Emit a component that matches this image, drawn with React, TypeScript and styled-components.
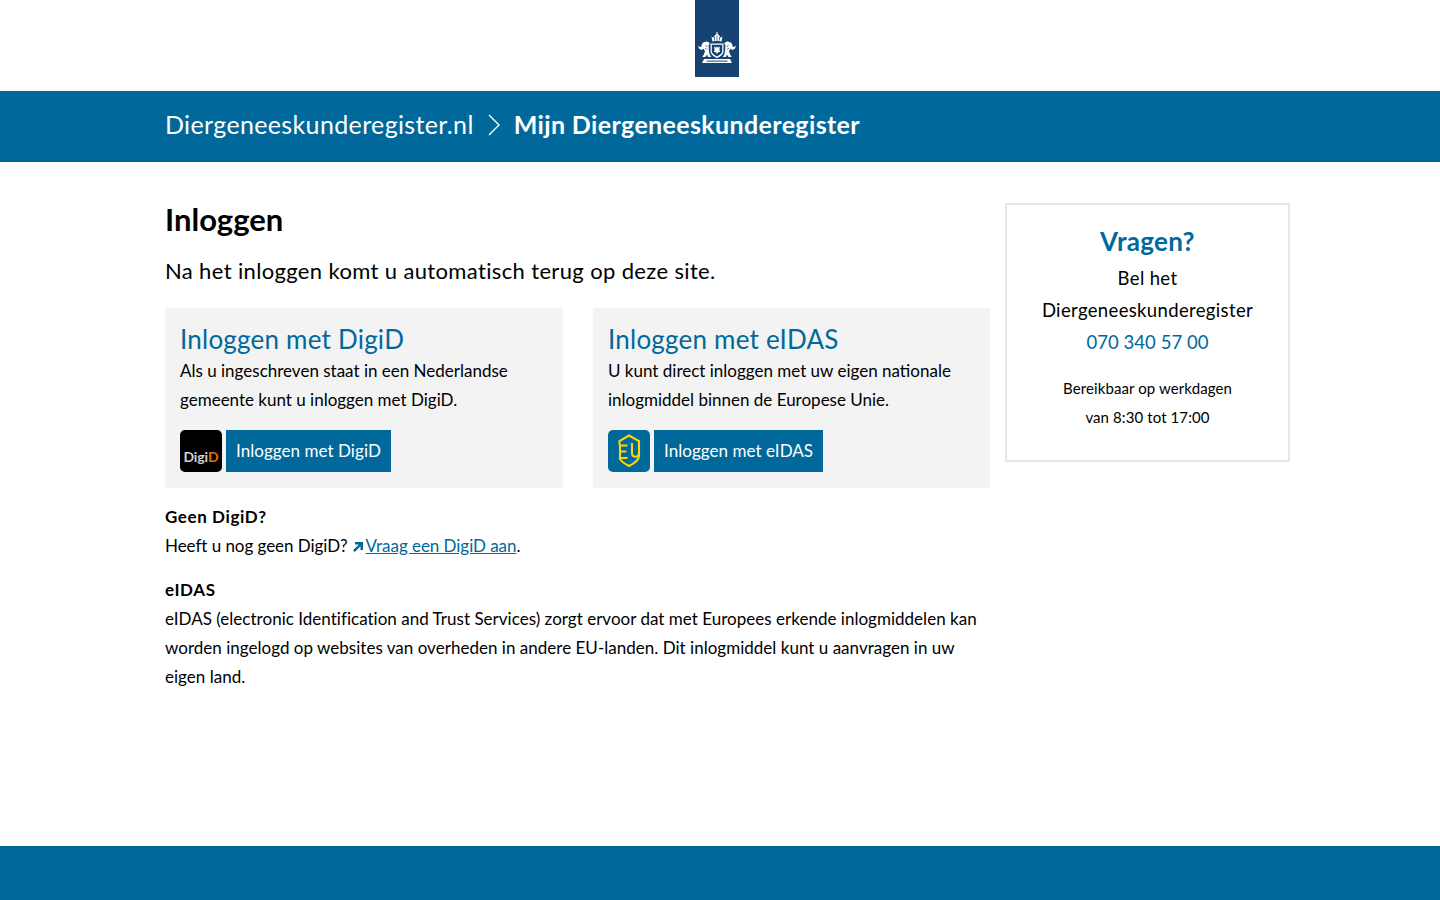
import React from 'react';
import styled, { createGlobalStyle } from 'styled-components';

const GlobalStyle = createGlobalStyle`
  html, body { margin: 0; padding: 0; background: #fff; }
  body {
    font-family: Lato, "Noto Sans", sans-serif;
    color: #000;
    font-size: 16px;
    line-height: 29px;
  }
`;

const Page = styled.div`
  min-height: 900px;
  display: flex;
  flex-direction: column;
`;

const LogoBar = styled.header`
  height: 91px;
  display: flex;
  justify-content: center;
  box-sizing: border-box;
  padding-left: 154px;
  padding-right: 160px;
`;

const LogoRibbon = styled.div`
  width: 44px;
  height: 77px;
  background: #154273;
  display: flex;
  flex-direction: column;
  align-items: center;
  justify-content: flex-end;
  padding-bottom: 13px;
  box-sizing: border-box;
`;

const Band = styled.div`
  height: 71px;
  box-sizing: border-box;
  padding: 0 150px 4px 165px;
  background: #01689b;
  color: #fff;
  display: flex;
  align-items: center;
  font-size: 25px;
`;

const BandLink = styled.a`
  color: #fff;
  text-decoration: none;
  letter-spacing: 0.36px;
`;

const BandChevron = styled.svg`
  width: 12px;
  height: 22px;
  margin: 0 14px;
`;

const BandTitle = styled.strong`
  font-weight: 700;
  letter-spacing: 0.37px;
`;

const Content = styled.div`
  flex: 1;
  padding: 41px 150px 0 165px;
  display: grid;
  grid-template-columns: 825px 285px;
  column-gap: 15px;
  align-items: start;
`;

const Main = styled.main``;

const Title = styled.h1`
  margin: 0;
  font-size: 31px;
  line-height: 32px;
  font-weight: 700;
`;

const Intro = styled.p`
  margin: 20px 0 0;
  font-size: 22px;
  line-height: 32px;
  letter-spacing: 0.36px;
`;

const Cards = styled.div`
  margin-top: 21px;
  display: grid;
  grid-template-columns: 398px 397px;
  column-gap: 30px;
`;

const Card = styled.section`
  background: #f3f3f3;
  height: 180px;
  box-sizing: border-box;
  padding: 15px;
`;

const CardTitle = styled.h2`
  margin: 0;
  font-size: 26px;
  line-height: 33px;
  font-weight: 400;
  color: #01689b;
  letter-spacing: 0.22px;
`;

const CardText = styled.p`
  margin: 0;
  font-size: 17px;
  line-height: 29px;
`;

const LoginRow = styled.div`
  margin-top: 16px;
  display: flex;
  gap: 4px;
`;

const LoginIcon = styled.div<{ $bg: string }>`
  width: 42px;
  height: 42px;
  border-radius: 5px;
  background: ${(p) => p.$bg};
  display: flex;
  align-items: center;
  justify-content: center;
`;

const DigidMark = styled.span`
  font-size: 14px;
  line-height: 1;
  font-weight: 700;
  color: #cfcfcf;
  margin-top: 12px;
  letter-spacing: -0.1px;
`;

const DigidAccent = styled.span`
  color: #e17000;
`;

const LoginButton = styled.a`
  height: 42px;
  padding: 0 10px;
  background: #01689b;
  color: #fff;
  font-size: 17px;
  line-height: 42px;
  letter-spacing: 0.05px;
  text-decoration: none;
`;

const InfoBlock = styled.div`
  margin-top: 14px;
  font-size: 17px;
  line-height: 29px;

  & + & {
    margin-top: 15px;
  }
`;

const InfoHeading = styled.h3`
  margin: 0;
  font-size: 17px;
  line-height: 29px;
  font-weight: 700;
  letter-spacing: 0.6px;
`;

const InfoText = styled.p<{ $spacing: number }>`
  margin: 0;
  letter-spacing: ${(p) => p.$spacing}px;
`;

const ExternalLink = styled.a`
  color: #01689b;
  text-decoration: underline;
`;

const ExternalIcon = styled.svg`
  width: 10px;
  height: 10px;
  margin: 0 3px 0 5px;
`;

const Aside = styled.aside`
  border: 2px solid #e6e6e6;
  height: 259px;
  box-sizing: border-box;
  padding: 18px 15px 0;
  text-align: center;
`;

const AsideTitle = styled.h2`
  margin: 0 0 3px;
  color: #01689b;
  font-size: 26px;
  line-height: 36px;
  font-weight: 700;
  letter-spacing: 0.3px;
`;

const AsideText = styled.p`
  margin: 0;
  font-size: 18.5px;
  line-height: 32px;
  letter-spacing: 0.35px;
`;

const AsidePhone = styled(AsideText)`
  color: #01689b;
  letter-spacing: 0.05px;
`;

const AsideHours = styled.p`
  margin: 16px 0 0;
  font-size: 15px;
  line-height: 29px;
  letter-spacing: 0.1px;
`;

const Footer = styled.footer`
  height: 54px;
  background: #01689b;
`;

const Crest = () => (
  <svg width="38" height="32" viewBox="0 0 38 32" fill="#fff">
    {/* crown */}
    <path d="M14.500 9.500 13.500 4.500l2 1.300 1.200-2.300L19 1.500l2.300 2 1.200 2.300 2-1.300-1 5c-2.800-.9-6.200-.9-9 0Z" />
    <path d="M18.500 0h1v2h-1Z" />
    <path d="M16.500 5v3.500M19 3.500v5M21.500 5v3.500" stroke="#154273" strokeWidth=".7" />
    {/* shield */}
    <path d="M12.500 11.500h13v7.500c0 3.500-3 5.500-6.500 7-3.500-1.500-6.500-3.500-6.500-7Z" />
    <path d="M13.800 12.800h10.400v6.200c0 2.600-2.700 4.100-5.200 5.400-2.500-1.300-5.200-2.800-5.200-5.400Z" fill="#154273" />
    <path d="M16 14.500l2 1.200 1-1.500 1 1.500 2-1.200-.6 3 .6 2.500-2 .2-1 1.800-1-1.800-2-.2.600-2.500Z" />
    {/* lions */}
    <path d="M8.500 9.500c1.700 0 2.900 1 3.300 2.500l-1.200 1 .2 4c0 2.500.6 4.500 1.400 6.500l1.300 1.500H10l-.8-2.500-1.800 2.500H4.300l1.400-2.300L7 19.500l-1.200-2.800-2.300 1.300L1 16.500l-1-3 1.500 1.300 1.800.2.200-2 1.500-2.500Z" />
    <path d="M29.500 9.500c-1.700 0-2.900 1-3.300 2.500l1.200 1-.2 4c0 2.500-.6 4.500-1.400 6.500L24.500 25H28l.8-2.500 1.800 2.500h3.100l-1.400-2.300L31 19.500l1.200-2.800 2.300 1.300 2.500-1.500 1-3-1.500 1.300-1.800.2-.2-2-1.500-2.500Z" />
    <path d="M7.500 13l1.500 2M7 16l2 1.500M30.500 13L29 15M31 16l-2 1.500" stroke="#154273" strokeWidth=".7" />
    {/* ribbon */}
    <path d="M6 27h26l2 4H4Z" />
    <path d="M8.500 28.600h21v1h-21Z" fill="#154273" />
  </svg>
);

const EuShield = () => (
  <svg width="24" height="34" viewBox="0 0 24 34" fill="none" stroke="#ffd500" strokeWidth="2.100">
    <path d="M2.500 11V7L12 1.500 22 7v15c0 4-6 8-10 10-4-2-8-4-9.500-8" />
    <path d="M10.500 11.500H3v12.500h7.500M3 17.500h6.500" />
    <path d="M15 9v10c0 5 7 5 7 0" />
  </svg>
);

const App: React.FC = () => (
  <Page>
    <GlobalStyle />
    <LogoBar>
      <LogoRibbon>
        <Crest />
      </LogoRibbon>
    </LogoBar>
    <Band>
      <BandLink href="#">Diergeneeskunderegister.nl</BandLink>
      <BandChevron viewBox="0 0 12 22" fill="none" stroke="#fff" strokeWidth="1.400">
        <path d="M1 1l10 10L1 21" />
      </BandChevron>
      <BandTitle>Mijn Diergeneeskunderegister</BandTitle>
    </Band>
    <Content>
      <Main>
        <Title>Inloggen</Title>
        <Intro>Na het inloggen komt u automatisch terug op deze site.</Intro>
        <Cards>
          <Card>
            <CardTitle>Inloggen met DigiD</CardTitle>
            <CardText>
              Als u ingeschreven staat in een Nederlandse gemeente kunt u inloggen met DigiD.
            </CardText>
            <LoginRow>
              <LoginIcon $bg="#000">
                <DigidMark>
                  Digi<DigidAccent>D</DigidAccent>
                </DigidMark>
              </LoginIcon>
              <LoginButton href="#">Inloggen met DigiD</LoginButton>
            </LoginRow>
          </Card>
          <Card>
            <CardTitle>Inloggen met eIDAS</CardTitle>
            <CardText>
              U kunt direct inloggen met uw eigen nationale inlogmiddel binnen de Europese Unie.
            </CardText>
            <LoginRow>
              <LoginIcon $bg="#01689b">
                <EuShield />
              </LoginIcon>
              <LoginButton href="#">Inloggen met eIDAS</LoginButton>
            </LoginRow>
          </Card>
        </Cards>
        <InfoBlock>
          <InfoHeading>Geen DigiD?</InfoHeading>
          <InfoText $spacing={-0.05}>
            Heeft u nog geen DigiD?
            <ExternalIcon viewBox="0 0 10 10" fill="#01689b">
              <path d="M2 0h8v8H7.500V4.200L1.800 10 0 8.200 5.800 2.500H2Z" />
            </ExternalIcon>
            <ExternalLink href="#">Vraag een DigiD aan</ExternalLink>.
          </InfoText>
        </InfoBlock>
        <InfoBlock>
          <InfoHeading>eIDAS</InfoHeading>
          <InfoText $spacing={0.02}>
            eIDAS (electronic Identification and Trust Services) zorgt ervoor dat met Europees
            erkende inlogmiddelen kan worden ingelogd op websites van overheden in andere EU-landen.
            Dit inlogmiddel kunt u aanvragen in uw eigen land.
          </InfoText>
        </InfoBlock>
      </Main>
      <Aside>
        <AsideTitle>Vragen?</AsideTitle>
        <AsideText>Bel het Diergeneeskunderegister</AsideText>
        <AsidePhone>070 340 57 00</AsidePhone>
        <AsideHours>
          Bereikbaar op werkdagen
          <br />
          van 8:30 tot 17:00
        </AsideHours>
      </Aside>
    </Content>
    <Footer />
  </Page>
);

export default App;
